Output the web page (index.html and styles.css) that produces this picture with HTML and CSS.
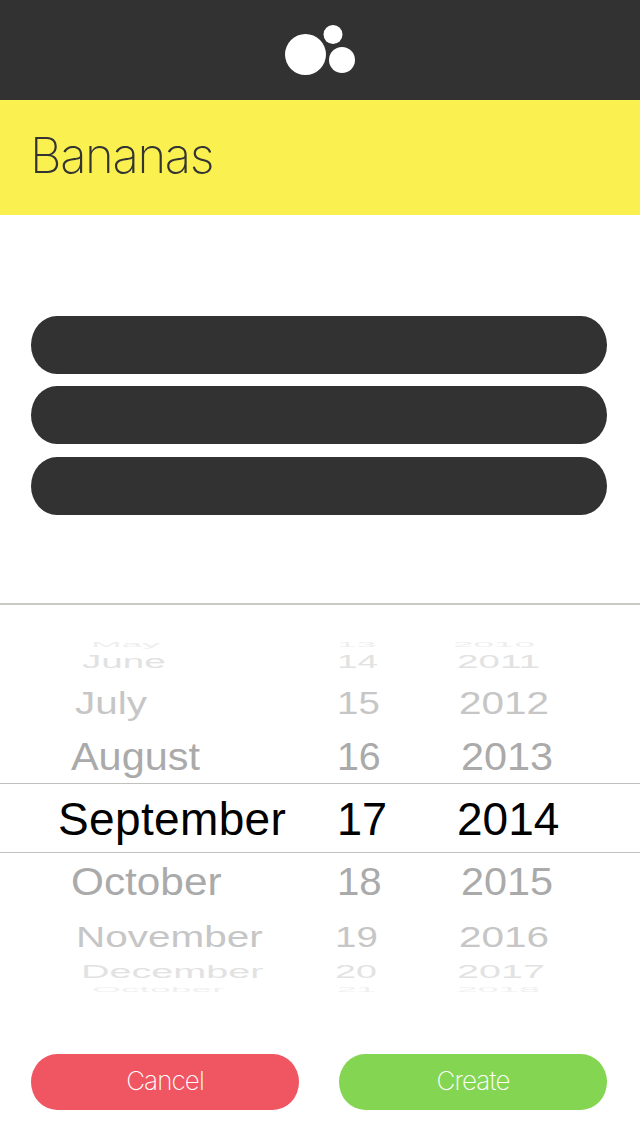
FILE: index.html
```html
<!DOCTYPE html>
<html lang="en">
<head>
    <meta charset="UTF-8">
    <title>Bananas</title>
    <link rel="stylesheet" href="styles.css">
</head>
<body>

<header class="top-bar">
    <svg class="logo" width="70" height="50" viewBox="0 0 70 50">
        <circle cx="20.5" cy="29.5" r="20.5" fill="#fff"/>
        <circle cx="48" cy="9.5" r="9.5" fill="#fff"/>
        <circle cx="57" cy="35" r="13" fill="#fff"/>
    </svg>
</header>

<section class="title-bar">
    <h1>Bananas</h1>
</section>

<section class="bars">
    <div class="bar"></div>
    <div class="bar"></div>
    <div class="bar"></div>
</section>

<section class="picker">
    <div class="wheel">
        <div class="row row-may"><span class="month">May</span><span class="day">13</span><span class="year">2010</span></div>
        <div class="row row-june"><span class="month">June</span><span class="day">14</span><span class="year">2011</span></div>
        <div class="row row-july"><span class="month">July</span><span class="day">15</span><span class="year">2012</span></div>
        <div class="row row-august"><span class="month">August</span><span class="day">16</span><span class="year">2013</span></div>
        <div class="row row-selected"><span class="month">September</span><span class="day">17</span><span class="year">2014</span></div>
        <div class="row row-october"><span class="month">October</span><span class="day">18</span><span class="year">2015</span></div>
        <div class="row row-november"><span class="month">November</span><span class="day">19</span><span class="year">2016</span></div>
        <div class="row row-december"><span class="month">December</span><span class="day">20</span><span class="year">2017</span></div>
        <div class="row row-last"><span class="month">October</span><span class="day">21</span><span class="year">2018</span></div>
    </div>
</section>

<footer class="actions">
    <button class="btn btn-cancel">Cancel</button>
    <button class="btn btn-create">Create</button>
</footer>

</body>
</html>
```

FILE: styles.css
```css
body {
    margin: 0;
    padding: 0;
    width: 640px;
    height: 1136px;
    overflow: hidden;
    background-color: #fff;
    font-family: "Liberation Sans", Arial, sans-serif;
}

.top-bar {
    height: 100px;
    background-color: #323232;
    display: flex;
    justify-content: center;
    align-items: flex-start;
}
.logo {
    margin-top: 25px;
}

.title-bar {
    box-sizing: border-box;
    height: 115px;
    background-color: #faf04f;
    display: flex;
    align-items: center;
    padding: 0 0 4px 30px;
}
.title-bar h1 {
    margin: 0;
    font-family: Inter, sans-serif;
    font-weight: 200;
    font-size: 49px;
    letter-spacing: -1.4px;
    color: #333;
}

.bars {
    padding: 101px 33px 0 31px;
    display: flex;
    flex-direction: column;
    gap: 12px;
}
.bar {
    height: 58px;
    border-radius: 26px / 29px;
    background-color: #323232;
}
.bar:last-child {
    margin-top: 1px;
}

.picker {
    margin-top: 88px;
    border-top: 2px solid #c9c9c5;
    height: 449px;
}
.wheel {
    margin-top: 35px;
    height: 357px;
    overflow: hidden;
    --sx: 1;
    --sy: 1;
}

.row {
    display: flex;
    align-items: center;
    color: #aaa;
    font-size: 46px;
    white-space: nowrap;
    --ds: 0.95;
}
.row span {
    display: block;
    line-height: 1;
    transform-origin: left center;
    transform: translateX(var(--x)) scale(var(--sx), var(--sy));
}
.month { width: 337px; --x: var(--mx); }
.year { --x: var(--yx); }
.row .day {
    width: 117px;
    transform: translateX(var(--dx)) scale(calc(var(--sx) * var(--ds)), var(--sy));
}

.row-may {
    height: 7px;
    color: #eee;
    --sx: 0.8; --sy: 0.17;
    --mx: 91px; --dx: 0px; --yx: -1px;
}
.row-june {
    height: 30px;
    color: #e2e2e2;
    --sx: 0.84; --sy: 0.4;
    --mx: 82px; --dx: 0px; --yx: 3px;
}
.row-july {
    height: 52px;
    color: #c6c6c6;
    --sx: 0.88; --sy: 0.7;
    --mx: 75px; --dx: 0px; --yx: 5px;
}
.row-august {
    height: 54px;
    color: #aaa;
    --sx: 0.9; --sy: 0.86;
    --mx: 71px; --dx: 0px; --yx: 7px;
}
.row-selected {
    box-sizing: content-box;
    height: 67px;
    padding-top: 1px;
    border-top: 1px solid #c0c0bc;
    border-bottom: 1px solid #c0c0bc;
    color: #000;
    --sx: 1; --sy: 1; --ds: 0.98;
    --mx: 58px; --dx: 0px; --yx: 3px;
}
.row-selected .month {
    letter-spacing: 0.35px;
}
.row-october {
    height: 56px;
    color: #aaa;
    --sx: 0.92; --sy: 0.86;
    --mx: 71px; --dx: 0px; --yx: 7px;
}
.row-october .year {
    transform: translateX(var(--x)) scale(0.9, var(--sy));
}
.row-november {
    height: 54px;
    color: #c6c6c6;
    --sx: 0.88; --sy: 0.66;
    --mx: 76px; --dx: -2px; --yx: 5px;
}
.row-december {
    height: 18px;
    color: #e2e2e2;
    --sx: 0.86; --sy: 0.4;
    --mx: 81px; --dx: -2px; --yx: 3px;
}
.row-last {
    height: 18px;
    color: #f0f0f0;
    --sx: 0.81; --sy: 0.15;
    --mx: 92px; --dx: 0px; --yx: 3px;
}

.actions {
    display: flex;
    gap: 40px;
    padding-left: 31px;
}
.btn {
    width: 268px;
    height: 56px;
    border: none;
    border-radius: 26px / 28px;
    padding: 0 0 3px;
    color: #fff;
    font-family: Inter, sans-serif;
    font-weight: 200;
    font-size: 26px;
    letter-spacing: -0.9px;
}
.btn-cancel { background-color: #ef5662; }
.btn-create { background-color: #84d552; }
```
